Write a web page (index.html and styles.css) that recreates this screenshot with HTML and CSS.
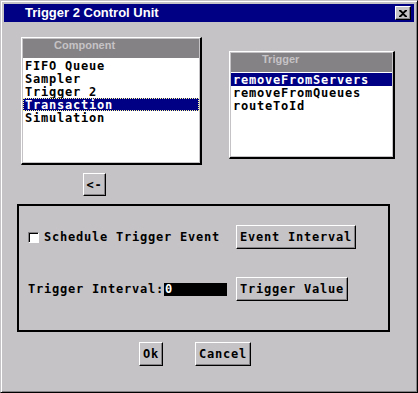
FILE: index.html
```html
<!DOCTYPE html>
<html lang="en">
<head>
  <meta charset="UTF-8">
  <title>Trigger 2 Control Unit</title>
  <link rel="stylesheet" href="styles.css">
</head>
<body>
<div class="window">
  <div class="titlebar">
    <span class="title">Trigger 2 Control Unit</span>
    <span class="close">
      <svg width="8" height="7" viewBox="0 0 8 7"><path d="M0 0h2l2 2 2-2h2v1L5 3.5 8 6v1H6L4 5 2 7H0V6l3-2.5L0 1z" fill="#000"/></svg>
    </span>
  </div>

  <div class="body">
    <div class="lists">
      <div class="listbox comp">
        <div class="list-head">Component</div>
        <div class="list-items">
          <div class="item">FIFO Queue</div>
          <div class="item">Sampler</div>
          <div class="item">Trigger 2</div>
          <div class="item selected focus">Transaction</div>
          <div class="item">Simulation</div>
        </div>
      </div>
      <div class="listbox trig">
        <div class="list-head">Trigger</div>
        <div class="list-items">
          <div class="item selected">removeFromServers</div>
          <div class="item">removeFromQueues</div>
          <div class="item">routeToId</div>
        </div>
      </div>
    </div>

    <div class="arrow-row">
      <button class="btn arrow">&lt;-</button>
    </div>

    <div class="group">
      <div class="cell">
        <span class="check"></span>
        <span class="label">Schedule Trigger Event</span>
      </div>
      <div class="cell"><button class="btn">Event Interval</button></div>
      <div class="cell">
        <span class="label">Trigger Interval:</span><span class="field">0</span>
      </div>
      <div class="cell"><button class="btn">Trigger Value</button></div>
    </div>

    <div class="actions">
      <button class="btn">Ok</button>
      <button class="btn">Cancel</button>
    </div>
  </div>
</div>
</body>
</html>
```

FILE: styles.css
```css
html, body {
  margin: 0;
  padding: 0;
  background: #c6c3c6;
}

.window {
  box-sizing: border-box;
  width: 418px;
  height: 393px;
  padding: 3px;
  background: #c6c3c6;
  border: 1px solid;
  border-color: #c6c3c6 #000 #000 #c6c3c6;
  box-shadow: inset 1px 1px #fff, inset -1px -1px #848284;
}

.titlebar {
  height: 18px;
  display: flex;
  align-items: center;
  justify-content: space-between;
  background: #000084;
  padding-left: 21px;
  padding-right: 3px;
}

.title {
  color: #fff;
  font: bold 13px "Liberation Sans", Arial, sans-serif;
  line-height: 18px;
}

.close {
  box-sizing: border-box;
  width: 16px;
  height: 14px;
  display: flex;
  align-items: center;
  justify-content: center;
  background: #c6c3c6;
  border: 1px solid;
  border-color: #fff #000 #000 #fff;
  box-shadow: inset -1px -1px #848284;
}

.body {
  padding: 15px 0 0 14px;
  font: bold 12px "DejaVu Sans Mono", "Liberation Mono", monospace;
  letter-spacing: 0.78px;
  color: #000;
}

.lists {
  display: flex;
  align-items: flex-start;
  margin-left: 3px;
}

.listbox {
  box-sizing: border-box;
  padding: 1px;
  border-style: solid;
  border-width: 1px 2px 2px 1px;
  border-color: #fff #000 #000 #fff;
  display: flex;
  flex-direction: column;
}

.comp {
  width: 181px;
  height: 128px;
}

.trig {
  width: 166px;
  height: 108px;
  margin-top: 14px;
  margin-left: 27px;
}

.list-head {
  height: 19px;
  line-height: 20px;
  background: #848284;
  color: #c6c3c6;
  padding-left: 31px;
  font: bold 11px "Liberation Sans", Arial, sans-serif;
  letter-spacing: 0;
}

.list-items {
  flex: 1;
  background: #fff;
  padding-top: 1px;
}

.item {
  height: 13px;
  line-height: 14px;
  padding-left: 2px;
  white-space: nowrap;
}

.item.selected {
  background: #000084;
  color: #fff;
}

.item.focus {
  outline: 1px dotted #ffff9c;
  outline-offset: -1px;
}

.btn {
  box-sizing: border-box;
  height: 24px;
  padding: 0 3px;
  margin: 0;
  background: #c6c3c6;
  border: 1px solid;
  border-color: #fff #000 #000 #fff;
  box-shadow: inset -1px -1px #848284;
  font: inherit;
  letter-spacing: inherit;
  color: #000;
}

.arrow-row {
  margin-top: 8px;
  margin-left: 65px;
}

.btn.arrow {
  width: 23px;
  height: 23px;
  padding: 0;
}

.group {
  box-sizing: border-box;
  width: 373px;
  height: 128px;
  margin-top: 8px;
  margin-left: -1px;
  border: 2px solid #000;
  padding: 19px 0 0 9px;
  display: grid;
  grid-template-columns: 208px auto;
  grid-auto-rows: 24px;
  row-gap: 28px;
}

.cell {
  display: flex;
  align-items: center;
}

.check {
  box-sizing: border-box;
  width: 11px;
  height: 11px;
  background: #fff;
  border: 1px solid;
  border-color: #848284 #fff #fff #848284;
  box-shadow: inset 1px 1px #000;
  margin-right: 5px;
}

.field {
  box-sizing: border-box;
  width: 63px;
  height: 13px;
  line-height: 13px;
  background: #000;
  color: #fff;
  padding-left: 1px;
}

.actions {
  display: flex;
  gap: 32px;
  margin-top: 10px;
  margin-left: 121px;
}
```
